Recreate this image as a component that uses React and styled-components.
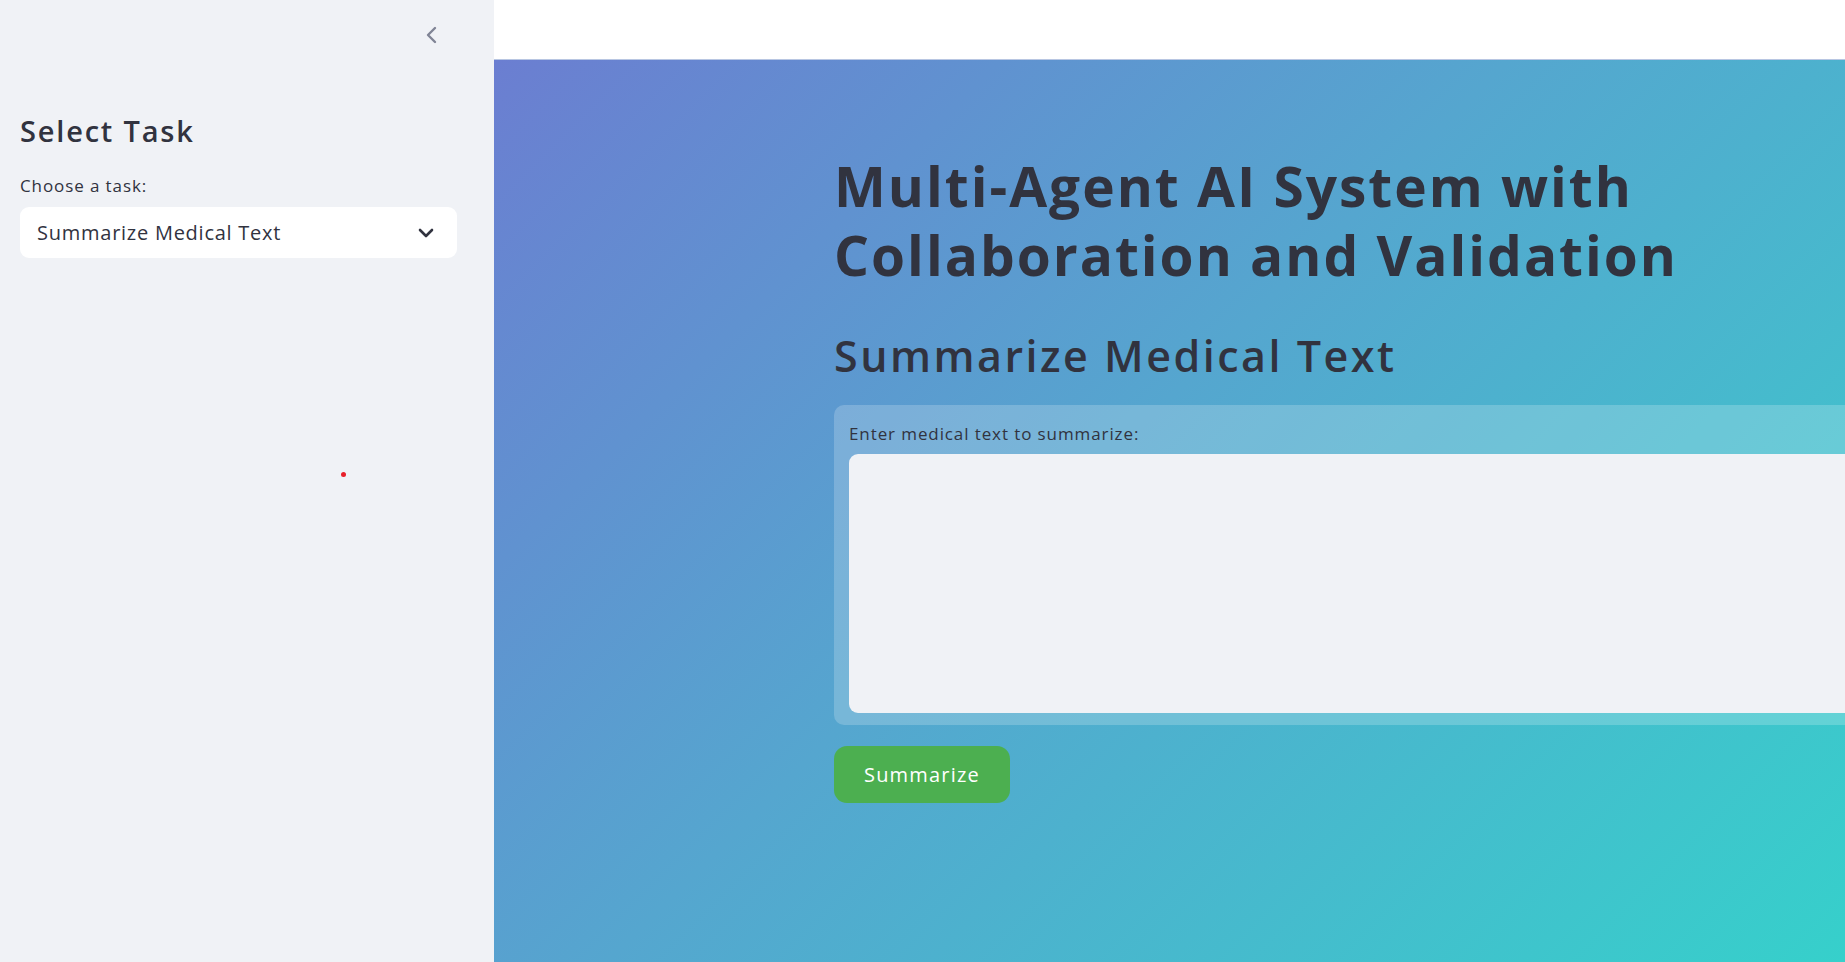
import styled, { createGlobalStyle } from 'styled-components'

const GlobalStyle = createGlobalStyle`
    html, body {
        margin: 0;
        padding: 0;
        height: 100%;
        overflow: hidden;
    }
    body {
        font-family: 'Open Sans', 'Noto Sans', sans-serif;
        color: #31333f;
    }
    #root {
        height: 100%;
    }
`

const Page = styled.div`
    display: flex;
    height: 100vh;
    width: 100vw;
`

const Sidebar = styled.aside`
    position: relative;
    width: 494px;
    flex-shrink: 0;
    background: #f0f2f6;
    display: flex;
    flex-direction: column;
    padding: 0 37px 0 20px;
    box-sizing: border-box;
`

const CollapseRow = styled.div`
    height: 70px;
    display: flex;
    align-items: center;
    justify-content: flex-end;
    padding-right: 17px;
    color: #808495;
`

const SideTitle = styled.h2`
    margin: 43px 0 0;
    font-size: 29px;
    line-height: 35px;
    font-weight: 600;
    letter-spacing: 1.8px;
    color: #31333f;
`

const FieldLabel = styled.label`
    display: block;
    margin-top: ${(p) => p.$top || 0}px;
    font-size: 17px;
    line-height: 20px;
    letter-spacing: 0.9px;
    color: #31333f;
`

const SelectBox = styled.div`
    margin-top: 11px;
    height: 51px;
    background: #fff;
    border-radius: 9px;
    display: flex;
    align-items: center;
    justify-content: space-between;
    padding: 0 23px 0 17px;
    font-size: 20px;
    letter-spacing: 0.75px;
    color: #31333f;
`

const Cursor = styled.span`
    position: absolute;
    left: 341px;
    top: 472px;
    width: 5px;
    height: 5px;
    border-radius: 50%;
    background: #e8202a;
`

const Main = styled.main`
    flex: 1;
    display: flex;
    flex-direction: column;
    min-width: 0;
`

const Header = styled.header`
    height: 60px;
    flex-shrink: 0;
    background: #fff;
    border-bottom: 1px solid #b8c6e2;
    box-sizing: border-box;
`

const Canvas = styled.section`
    flex: 1;
    overflow: hidden;
    background: linear-gradient(135deg, #6b7ed1 0%, #55a6cf 45%, #36d0cb 100%);
    padding: 91px 0 0 340px;
    box-sizing: border-box;
`

const Content = styled.div`
    width: 1200px;
`

const Title = styled.h1`
    margin: 0;
    font-size: 55px;
    line-height: 69px;
    font-weight: 700;
    letter-spacing: 2px;
    color: #31333f;
`

const SubTitle = styled.h2`
    margin: 40px 0 0;
    font-size: 43px;
    line-height: 53px;
    font-weight: 600;
    letter-spacing: 2.5px;
    color: #31333f;
`

const FormPanel = styled.div`
    margin-top: 23px;
    background: rgba(255, 255, 255, 0.2);
    border-radius: 10px;
    padding: 19px 16px 12px 15px;
`

const TextArea = styled.textarea`
    display: block;
    margin-top: 10px;
    width: 100%;
    height: 259px;
    box-sizing: border-box;
    border: none;
    border-radius: 9px;
    background: #f0f2f6;
    resize: none;
    outline: none;
    font-family: inherit;
`

const ActionButton = styled.button`
    margin-top: 21px;
    width: 176px;
    height: 57px;
    border: none;
    border-radius: 13px;
    background: #4caf50;
    color: #fff;
    font-family: inherit;
    font-size: 20px;
    font-weight: 500;
    letter-spacing: 1.2px;
    cursor: pointer;
`

function ChevronLeft() {
    return (
        <svg width='16' height='18' viewBox='0 0 16 18' fill='none'>
            <path d='M11 2 L4 9 L11 16' stroke='currentColor' strokeWidth='2.4' strokeLinecap='round' strokeLinejoin='round' />
        </svg>
    )
}

function ChevronDown() {
    return (
        <svg width='16' height='10' viewBox='0 0 16 10' fill='none'>
            <path d='M2 2 L8 8 L14 2' stroke='#31333f' strokeWidth='2.6' strokeLinecap='round' strokeLinejoin='round' />
        </svg>
    )
}

export default function App() {
    return (
        <>
            <GlobalStyle />
            <Page>
                <Sidebar>
                    <CollapseRow>
                        <ChevronLeft />
                    </CollapseRow>
                    <SideTitle>Select Task</SideTitle>
                    <FieldLabel $top={28}>Choose a task:</FieldLabel>
                    <SelectBox>
                        <span>Summarize Medical Text</span>
                        <ChevronDown />
                    </SelectBox>
                    <Cursor />
                </Sidebar>
                <Main>
                    <Header />
                    <Canvas>
                        <Content>
                            <Title>
                                Multi-Agent AI System with
                                <br />
                                Collaboration and Validation
                            </Title>
                            <SubTitle>Summarize Medical Text</SubTitle>
                            <FormPanel>
                                <FieldLabel>Enter medical text to summarize:</FieldLabel>
                                <TextArea />
                            </FormPanel>
                            <ActionButton>Summarize</ActionButton>
                        </Content>
                    </Canvas>
                </Main>
            </Page>
        </>
    )
}
